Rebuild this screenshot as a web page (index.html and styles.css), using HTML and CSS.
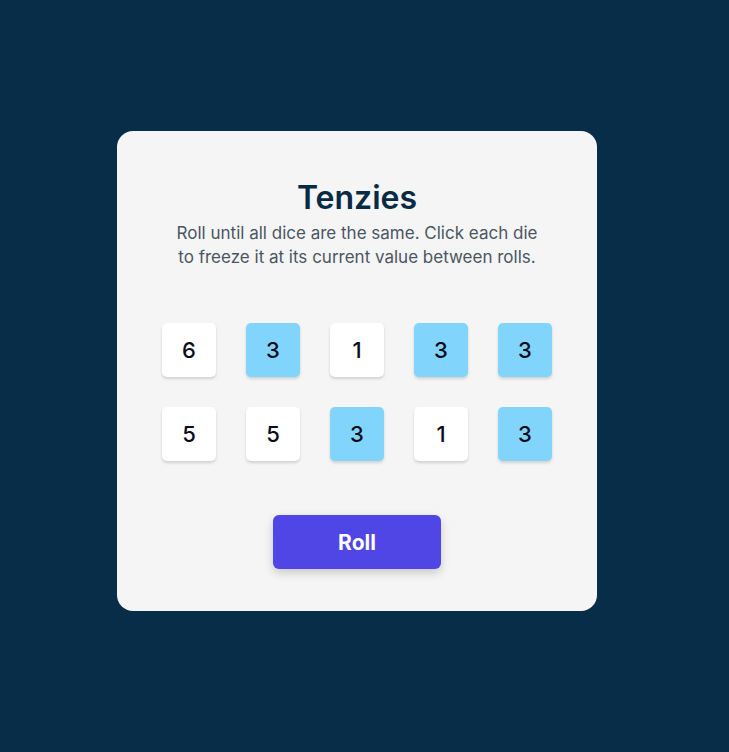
FILE: index.html
```html
<!DOCTYPE html>
<html lang="en">
<head>
<meta charset="utf-8">
<title>Tenzies</title>
<link rel="stylesheet" href="styles.css">
</head>
<body>
<div class="page">
  <main class="card">
    <header class="intro">
      <h1 class="title">Tenzies</h1>
      <p class="instructions">Roll until all dice are the same. Click each die to freeze it at its current value between rolls.</p>
    </header>
    <div class="dice">
      <button class="die">6</button>
      <button class="die held">3</button>
      <button class="die">1</button>
      <button class="die held">3</button>
      <button class="die held">3</button>
      <button class="die">5</button>
      <button class="die">5</button>
      <button class="die held">3</button>
      <button class="die">1</button>
      <button class="die held">3</button>
    </div>
    <button class="roll">Roll</button>
  </main>
</div>
</body>
</html>
```

FILE: styles.css
```css
* { box-sizing: border-box; }
html, body { margin: 0; padding: 0; }
body {
  background: #072D48;
  font-family: Inter, "Noto Sans", sans-serif;
  min-height: 100vh;
}
.page {
  display: flex;
  justify-content: center;
  align-items: flex-start;
  padding: 131px 15px 0 0;
}
.card {
  width: 480px;
  height: 480px;
  background: #F5F5F5;
  border-radius: 16px;
  display: flex;
  flex-direction: column;
  align-items: center;
  padding: 47px 45px 0;
}
.intro {
  display: flex;
  flex-direction: column;
  align-items: center;
  text-align: center;
}
.title {
  margin: 0;
  font-size: 32px;
  line-height: 40px;
  font-weight: 600;
  color: #072B45;
}
.instructions {
  margin: 3px 0 0;
  width: 366px;
  font-size: 17px;
  line-height: 24px;
  color: #4B5563;
}
.dice {
  margin-top: 54px;
  display: grid;
  grid-template-columns: repeat(5, 54px);
  grid-auto-rows: 54px;
  gap: 30px;
}
.die {
  border: none;
  border-radius: 5px;
  background: #FFFFFF;
  box-shadow: 0 2px 3px rgba(0, 0, 0, 0.15);
  font-family: Inter, "Noto Sans", sans-serif;
  font-size: 22px;
  font-weight: 500;
  color: #0B0B1A;
  padding: 0;
}
.die.held { background: #81D4FC; }
.roll {
  margin-top: 54px;
  width: 168px;
  height: 54px;
  border: none;
  border-radius: 6px;
  background: #5045E5;
  color: #FFFFFF;
  font-family: Inter, "Noto Sans", sans-serif;
  font-size: 21px;
  font-weight: 700;
  box-shadow: 0 4px 10px rgba(0, 0, 0, 0.18);
}
```
